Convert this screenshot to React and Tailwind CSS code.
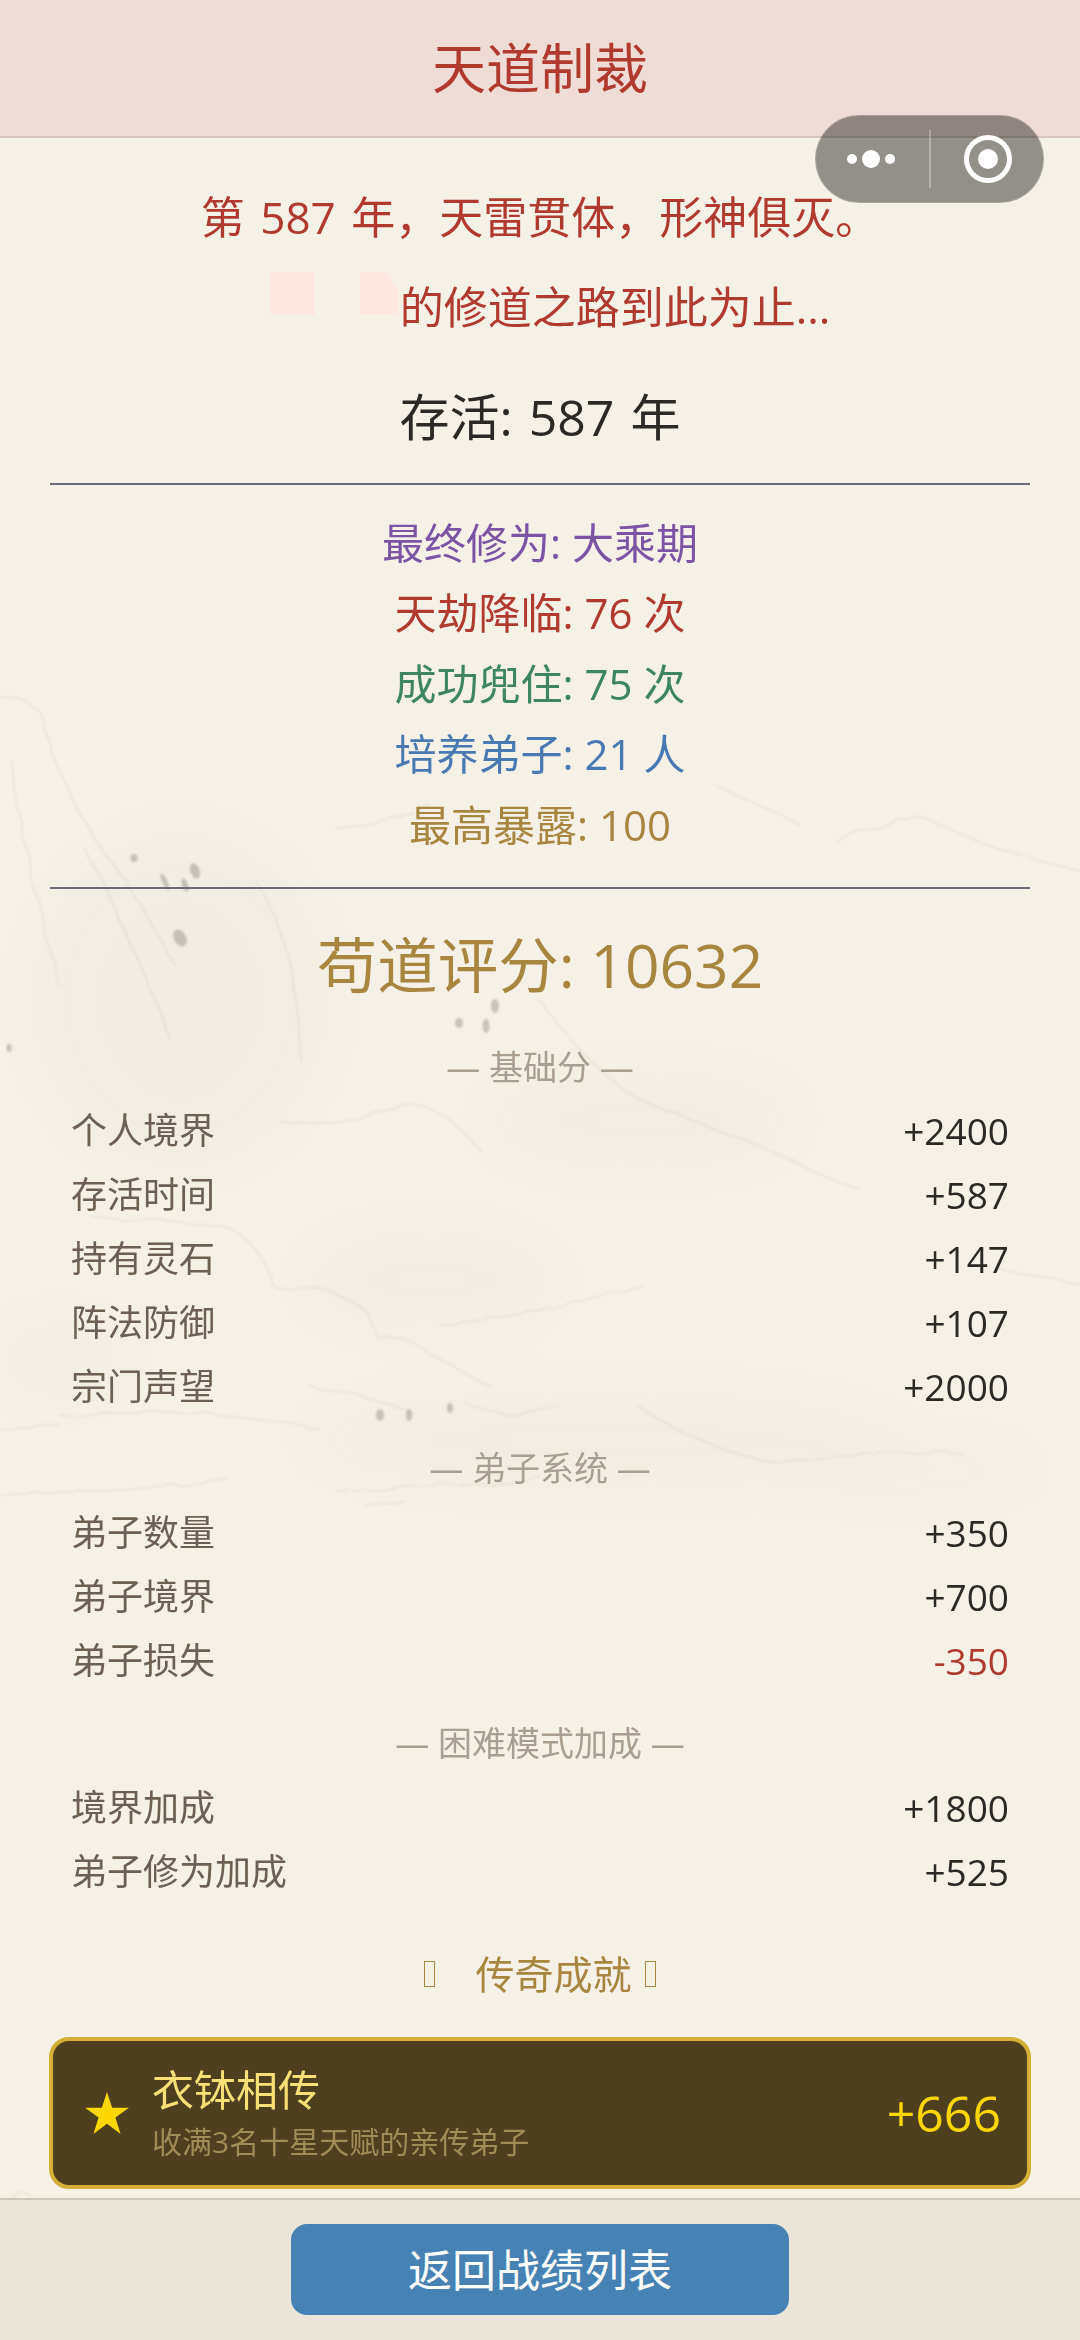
import React from 'react';

const FONT = "font-['Open_Sans','Noto_Sans_CJK_SC',sans-serif]";

const STATS = [
  { label: '最终修为: 大乘期', color: 'text-[#7b55a3]' },
  { label: '天劫降临: 76 次', color: 'text-[#b03a2e]' },
  { label: '成功兜住: 75 次', color: 'text-[#3f8562]' },
  { label: '培养弟子: 21 人', color: 'text-[#4a78b0]' },
  { label: '最高暴露: 100', color: 'text-[#a88640]' },
];

const SECTIONS = [
  {
    title: '— 基础分 —',
    top: 'mt-[40px]',
    rowsTop: 'mt-[10px]',
    rows: [
      ['个人境界', '+2400'],
      ['存活时间', '+587'],
      ['持有灵石', '+147'],
      ['阵法防御', '+107'],
      ['宗门声望', '+2000'],
    ],
  },
  {
    title: '— 弟子系统 —',
    top: 'mt-[27px]',
    rowsTop: 'mt-[11px]',
    rows: [
      ['弟子数量', '+350'],
      ['弟子境界', '+700'],
      ['弟子损失', '-350'],
    ],
  },
  {
    title: '— 困难模式加成 —',
    top: 'mt-[28px]',
    rowsTop: 'mt-[11px]',
    rows: [
      ['境界加成', '+1800'],
      ['弟子修为加成', '+525'],
    ],
  },
];

const InkBackdrop = () => (
  <svg className="absolute inset-0 pointer-events-none" width="1080" height="2340" viewBox="0 0 1080 2340" fill="none">
    <defs>
      <filter id="soft" x="-20%" y="-20%" width="140%" height="140%">
        <feTurbulence type="fractalNoise" baseFrequency="0.03" numOctaves="2" seed="4" result="noise" />
        <feDisplacementMap in="SourceGraphic" in2="noise" scale="10" />
        <feGaussianBlur stdDeviation="1" />
      </filter>
      <filter id="dot" x="-50%" y="-50%" width="200%" height="200%"><feGaussianBlur stdDeviation="1" /></filter>
      <filter id="wash" x="-50%" y="-50%" width="200%" height="200%"><feGaussianBlur stdDeviation="26" /></filter>
    </defs>
    <g filter="url(#wash)" fill="#8d8778" opacity="0.03">
      <ellipse cx="180" cy="1000" rx="150" ry="170" />
      <ellipse cx="640" cy="1120" rx="160" ry="50" />
      <ellipse cx="60" cy="1360" rx="70" ry="40" />
      <ellipse cx="430" cy="1280" rx="130" ry="50" />
      <ellipse cx="600" cy="1440" rx="300" ry="50" />
      <ellipse cx="900" cy="1470" rx="140" ry="25" />
    </g>
    <g filter="url(#soft)" stroke="#6f6a60" strokeLinecap="round" strokeLinejoin="round" opacity="0.1" strokeWidth="1.6">
      <path d="M0 697 Q25 697 40 712 Q55 765 72 800 Q100 850 125 880 Q150 920 175 965" />
      <path d="M10 760 Q20 830 60 990" />
      <path d="M85 850 Q130 930 170 1040" />
      <path d="M255 880 Q300 950 300 1060" />
      <path d="M337 830 Q395 823 430 805" />
      <path d="M715 785 Q770 810 800 825 M835 840 Q900 815 930 820 Q1000 855 1080 870" />
      <path d="M280 1120 Q330 1130 400 1105 Q440 1100 480 1150" />
      <path d="M540 1000 Q590 1070 640 1100 Q720 1130 860 1190" />
      <path d="M90 1215 Q170 1225 220 1224 Q262 1240 272 1285 L292 1290 Q330 1284 365 1310 L380 1340 Q410 1332 430 1355 L490 1385" />
      <path d="M310 1385 Q360 1395 410 1410" />
      <path d="M465 1403 L515 1416 L560 1408" />
      <path d="M440 1325 Q540 1315 640 1285" />
      <path d="M0 1430 L60 1425" />
      <path d="M60 1415 Q230 1408 320 1430" />
      <path d="M0 1495 Q130 1490 230 1480" />
      <path d="M335 1490 Q450 1488 540 1478" />
      <path d="M365 1505 L405 1502" />
      <path d="M640 1408 Q700 1448 780 1465 Q860 1448 960 1452" />
      <path d="M1000 1270 L1080 1285" />
      <path d="M8 2198 L20 2190 L30 2196" />
    </g>
    <g fill="#6d6a63" opacity="0.34" filter="url(#dot)">
      <ellipse cx="134" cy="858" rx="3.5" ry="4" />
      <ellipse cx="195" cy="871" rx="4.5" ry="8" transform="rotate(-20 195 871)" />
      <ellipse cx="165" cy="882" rx="2.5" ry="9" transform="rotate(-25 165 882)" />
      <ellipse cx="185" cy="885" rx="3" ry="7" transform="rotate(-20 185 885)" />
      <ellipse cx="180" cy="938" rx="6" ry="9" transform="rotate(-30 180 938)" />
      <ellipse cx="495" cy="1006" rx="4" ry="7" />
      <ellipse cx="459" cy="1023" rx="4" ry="5" />
      <ellipse cx="486" cy="1026" rx="3.5" ry="7" />
      <ellipse cx="380" cy="1415" rx="4" ry="6" />
      <ellipse cx="409" cy="1415" rx="3" ry="6" />
      <ellipse cx="450" cy="1408" rx="3" ry="5" />
      <ellipse cx="9" cy="1048" rx="2.5" ry="4" />
    </g>
  </svg>
);

const WeChatCapsule = () => (
  <div className="absolute left-[815px] top-[115px] z-10 flex h-[88px] w-[229px] items-center rounded-full border border-white/20 bg-black/40">
    <svg className="ml-[22px]" width="70" height="24" viewBox="0 0 70 24" fill="#fff">
      <circle cx="14" cy="12" r="5" />
      <circle cx="33" cy="12" r="9" />
      <circle cx="52" cy="12" r="5" />
    </svg>
    <div className="ml-[21px] h-[58px] w-[2px] bg-white/30" />
    <svg className="ml-[32px]" width="50" height="50" viewBox="0 0 50 50" fill="none">
      <circle cx="25" cy="25" r="21.5" stroke="#fff" strokeWidth="5" />
      <circle cx="25" cy="25" r="10" fill="#fff" />
    </svg>
  </div>
);

const ScoreRow = ({ label, value }) => (
  <div className="flex h-[64px] items-center justify-between pl-[71px] pr-[71px] text-[36px]">
    <span className="text-[#6b6052]">{label}</span>
    <span className={`text-[37px] ${value.startsWith('-') ? 'text-[#b03a2e]' : 'text-[#2c2825]'}`}>{value}</span>
  </div>
);

const App = () => {
  return (
    <div className={`relative flex h-[2340px] w-[1080px] flex-col overflow-hidden bg-[#f6f1e7] ${FONT}`}>
      <InkBackdrop />
      <WeChatCapsule />

      <header className="relative flex h-[138px] shrink-0 items-center justify-center border-b-2 border-[#d6c6bb] bg-[#f0dcd6]">
        <h1 className="text-[54px] leading-none text-[#b03a2e]">天道制裁</h1>
      </header>

      <main className="relative flex-1 pt-[34px] text-center">
        <p className="h-[90px] text-[44px] leading-[90px] text-[#b03a2e] [word-spacing:4px]">第 587 年，天雷贯体，形神俱灭。</p>
        <p className="flex h-[90px] items-center justify-center text-[44px] text-[#b03a2e]">
          <span className="flex w-[150px] gap-[45px] pb-[28px] pl-[20px]">
            <i className="block h-[43px] w-[45px] bg-[#fde8df]" />
            <i className="block h-[43px] w-[38px] bg-[#fde8df] [clip-path:polygon(0_0,72%_0,100%_45%,100%_100%,0_100%)]" />
          </span>
          <span>的修道之路到此为止...</span>
        </p>
        <p className="mt-[20px] h-[90px] text-[50px] leading-[90px] text-[#2c2825] [word-spacing:3px]">存活: 587 年</p>

        <div className="mx-[50px] mt-[21px] h-[2px] bg-[#6b6b7c]" />

        <ul className="mt-[22.5px]">
          {STATS.map((s) => (
            <li key={s.label} className={`h-[70.6px] text-[42px] leading-[70.6px] ${s.color}`}>{s.label}</li>
          ))}
        </ul>

        <div className="mx-[50px] mt-[26.5px] h-[2px] bg-[#6b6b7c]" />

        <p className="mt-[36px] h-[80px] text-[60.5px] leading-[80px] text-[#a88640]">苟道评分: 10632</p>

        {SECTIONS.map((sec) => (
          <section key={sec.title}>
            <p className={`${sec.top} h-[44px] text-[34px] leading-[44px] text-[#a89f91]`}>{sec.title}</p>
            <div className={sec.rowsTop}>
              {sec.rows.map(([label, value]) => (
                <ScoreRow key={label} label={label} value={value} />
              ))}
            </div>
          </section>
        ))}

        <div className="mt-[40px] flex h-[60px] items-center justify-center text-[39px] text-[#a88640]">
          <i className="block h-[26px] w-[11px] border-[1.5px] border-[#a88640]" />
          <span className="ml-[40px] mr-[13px]">传奇成就</span>
          <i className="block h-[26px] w-[11px] border-[1.5px] border-[#a88640]" />
        </div>

        <div className="mx-[49px] mt-[33px] flex h-[152px] items-center rounded-[20px] border-4 border-[#d4af37] bg-[#4e3f1f] pl-[32px] pr-[26px] text-left">
          <svg width="44" height="42" viewBox="0 0 44 42" fill="#ffd700">
            <polygon points="22,0 27.2,15.8 44,15.8 30.4,25.6 35.6,42 22,31.8 8.4,42 13.6,25.6 0,15.8 16.8,15.8" />
          </svg>
          <div className="ml-[23px] flex-1">
            <p className="text-[42px] leading-[56px] text-[#f9e076]">衣钵相传</p>
            <p className="mt-[3px] text-[30px] leading-[42px] text-[#a08c55]">收满3名十星天赋的亲传弟子</p>
          </div>
          <span className="text-[50px] leading-[70px] text-[#ffd700]">+666</span>
        </div>
      </main>

      <footer className="relative flex h-[142px] shrink-0 items-start justify-center border-t-2 border-[#cfc6b8] bg-[#ebe4d8] pt-[24px]">
        <button className="h-[91px] w-[498px] rounded-[16px] bg-[#4682b4] text-[44px] text-white">返回战绩列表</button>
      </footer>
    </div>
  );
};

export default App;
